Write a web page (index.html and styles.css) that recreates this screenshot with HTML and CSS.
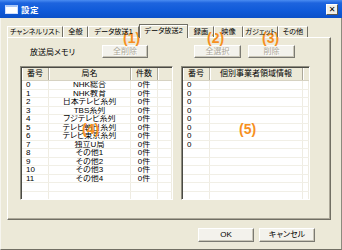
FILE: index.html
```html
<!DOCTYPE html>
<html lang="ja">
<head>
<meta charset="utf-8">
<link rel="stylesheet" href="styles.css">
</head>
<body>
<div class="window">
  <div class="titlebar">
    <span class="ticon"></span>
    <span class="ttext">設定</span>
    <span class="close">✕</span>
  </div>
  <div class="body">
    <div class="tabs">
      <span class="tab t1">チャンネルリスト</span>
      <span class="tab t2">全般</span>
      <span class="tab t3">データ放送1</span>
      <span class="tab t4 sel">データ放送2</span>
      <span class="tab t5">録画</span>
      <span class="tab t6">映像</span>
      <span class="tab t7">ガジェット</span>
      <span class="tab t8">その他</span>
    </div>
    <div class="panel">
      <div class="col col-left">
        <div class="toprow">
          <span class="label">放送局メモリ</span>
          <span class="btn dis w46">全削除</span>
        </div>
        <div class="list">
          <div class="row head"><span class="c num">番号</span><span class="c name">局名</span><span class="c cnt">件数</span><span class="c fill"></span></div>
          <div class="row"><span class="c num">0</span><span class="c name">NHK総合</span><span class="c cnt">0件</span><span class="c fill"></span></div>
          <div class="row"><span class="c num">1</span><span class="c name">NHK教育</span><span class="c cnt">0件</span><span class="c fill"></span></div>
          <div class="row"><span class="c num">2</span><span class="c name">日本テレビ系列</span><span class="c cnt">0件</span><span class="c fill"></span></div>
          <div class="row"><span class="c num">3</span><span class="c name">TBS系列</span><span class="c cnt">0件</span><span class="c fill"></span></div>
          <div class="row"><span class="c num">4</span><span class="c name">フジテレビ系列</span><span class="c cnt">0件</span><span class="c fill"></span></div>
          <div class="row"><span class="c num">5</span><span class="c name">テレビ朝日系列</span><span class="c cnt">0件</span><span class="c fill"></span></div>
          <div class="row"><span class="c num">6</span><span class="c name">テレビ東京系列</span><span class="c cnt">0件</span><span class="c fill"></span></div>
          <div class="row"><span class="c num">7</span><span class="c name">独立U局</span><span class="c cnt">0件</span><span class="c fill"></span></div>
          <div class="row"><span class="c num">8</span><span class="c name">その他1</span><span class="c cnt">0件</span><span class="c fill"></span></div>
          <div class="row"><span class="c num">9</span><span class="c name">その他2</span><span class="c cnt">0件</span><span class="c fill"></span></div>
          <div class="row"><span class="c num">10</span><span class="c name">その他3</span><span class="c cnt">0件</span><span class="c fill"></span></div>
          <div class="row"><span class="c num">11</span><span class="c name">その他4</span><span class="c cnt">0件</span><span class="c fill"></span></div>
          <div class="row"><span class="c num"></span><span class="c name"></span><span class="c cnt"></span><span class="c fill"></span></div>
          <div class="row"><span class="c num"></span><span class="c name"></span><span class="c cnt"></span><span class="c fill"></span></div>
          <div class="row"><span class="c num"></span><span class="c name"></span><span class="c cnt"></span><span class="c fill"></span></div>
        </div>
      </div>
      <div class="col col-right">
        <div class="toprow right">
          <span class="btn dis w47">全選択</span>
          <span class="btn dis w47">削除</span>
        </div>
        <div class="list">
          <div class="row head"><span class="c num">番号</span><span class="c info">個別事業者領域情報</span><span class="c fill"></span></div>
          <div class="row"><span class="c num">0</span><span class="c info"></span><span class="c fill"></span></div>
          <div class="row"><span class="c num">0</span><span class="c info"></span><span class="c fill"></span></div>
          <div class="row"><span class="c num">0</span><span class="c info"></span><span class="c fill"></span></div>
          <div class="row"><span class="c num">0</span><span class="c info"></span><span class="c fill"></span></div>
          <div class="row"><span class="c num">0</span><span class="c info"></span><span class="c fill"></span></div>
          <div class="row"><span class="c num">0</span><span class="c info"></span><span class="c fill"></span></div>
          <div class="row"><span class="c num">0</span><span class="c info"></span><span class="c fill"></span></div>
          <div class="row"><span class="c num">0</span><span class="c info"></span><span class="c fill"></span></div>
          <div class="row"><span class="c num"></span><span class="c info"></span><span class="c fill"></span></div>
          <div class="row"><span class="c num"></span><span class="c info"></span><span class="c fill"></span></div>
          <div class="row"><span class="c num"></span><span class="c info"></span><span class="c fill"></span></div>
          <div class="row"><span class="c num"></span><span class="c info"></span><span class="c fill"></span></div>
          <div class="row"><span class="c num"></span><span class="c info"></span><span class="c fill"></span></div>
          <div class="row"><span class="c num"></span><span class="c info"></span><span class="c fill"></span></div>
          <div class="row"><span class="c num"></span><span class="c info"></span><span class="c fill"></span></div>
        </div>
      </div>
    </div>
    <div class="footer">
      <span class="btn w56">OK</span>
      <span class="btn w56">キャンセル</span>
    </div>
  </div>
  <span class="note n1">(1)</span>
  <span class="note n2">(2)</span>
  <span class="note n3">(3)</span>
  <span class="note n4">(4)</span>
  <span class="note n5">(5)</span>
</div>
</body>
</html>
```

FILE: styles.css
```css
* { box-sizing: border-box; }
html, body { margin: 0; padding: 0; }
body {
  width: 342px;
  height: 250px;
  overflow: hidden;
  background: #ece9d8;
  font-family: "Liberation Sans", "Noto Sans CJK JP", sans-serif;
  font-size: 8px;
  font-feature-settings: "palt";
  color: #000;
}
.window {
  position: relative;
  width: 342px;
  height: 250px;
  background: #ece9d8;
  border-left: 1px solid #f6f5ef;
  border-right: 1px solid #8c8a7e;
  border-bottom: 1px solid #716f64;
  display: flex;
  flex-direction: column;
}
.titlebar {
  height: 18px;
  margin-left: -1px;
  margin-right: -1px;
  background: linear-gradient(#4a8cf2 0, #1d64de 3px, #0f5ad9 60%, #0b50c8 100%);
  display: flex;
  align-items: center;
  padding-left: 5px;
  padding-right: 4px;
  flex: none;
}
.ticon {
  width: 13px;
  height: 9px;
  background: #fff;
  border: 1px solid #cfe0ff;
  border-top: 2px solid #a9c6f7;
  margin-right: 3px;
}
.ttext {
  color: #fff;
  font-weight: bold;
  font-size: 8.5px;
  letter-spacing: 0.5px;
}
.close {
  margin-left: auto;
  width: 12px;
  height: 11px;
  background: #f2f0e8;
  border-top: 1px solid #fff;
  border-left: 1px solid #fff;
  border-right: 1px solid #5c5a50;
  border-bottom: 1px solid #5c5a50;
  font-size: 8px;
  font-weight: bold;
  line-height: 9px;
  text-align: center;
  color: #000;
  font-family: "DejaVu Sans", sans-serif;
}
.body {
  flex: 1;
  padding: 6px 10px 0 6px;
  display: flex;
  flex-direction: column;
}
.tabs {
  height: 13px;
  display: flex;
  align-items: flex-end;
  position: relative;
  z-index: 1;
  flex: none;
}
.tab {
  height: 11px;
  line-height: 10px;
  font-size: 7.2px;
  text-align: center;
  border-top: 1px solid #fff;
  border-left: 1px solid #fff;
  border-right: 1px solid #716f64;
  white-space: nowrap;
  display: flex;
  justify-content: center;
}
.t1 { width: 56px; }
.t2 { width: 25px; }
.t3 { width: 51px; }
.t4 { width: 49px; }
.t5 { width: 26px; }
.t6 { width: 29px; }
.t7 { width: 35px; }
.t8 { width: 30px; }
.tab.sel {
  height: 14px;
  margin-bottom: -1px;
  line-height: 12px;
  background: #ece9d8;
  border: 1px solid #716f64;
  border-bottom: none;
  box-shadow: inset 1px 1px 0 #fff;
}
.panel {
  height: 183px;
  border-top: 1px solid #fff;
  border-left: 1px solid #fff;
  border-right: 1px solid #716f64;
  border-bottom: 1px solid #716f64;
  box-shadow: inset -1px -1px 0 #aca899;
  display: flex;
  padding: 7px 0 0 12px;
  gap: 8px;
  flex: none;
}
.col {
  display: flex;
  flex-direction: column;
  gap: 8px;
}
.col-left { width: 153px; }
.col-right { width: 129px; }
.toprow {
  height: 13px;
  display: flex;
  align-items: center;
}
.toprow.right { padding-left: 13px; gap: 7px; }
.label {
  width: 82px;
  padding-left: 10px;
}
.btn {
  height: 13px;
  line-height: 11px;
  text-align: center;
  background: #f3f2ec;
  border-top: 1px solid #fff;
  border-left: 1px solid #fff;
  border-right: 1px solid #7b7a72;
  border-bottom: 1px solid #7b7a72;
  box-shadow: inset -1px -1px 0 #c9c6b8;
  white-space: nowrap;
}
.btn.dis {
  color: #aca899;
  text-shadow: 1px 1px 0 #fff;
}
.w46 { width: 46px; }
.w47 { width: 47px; }
.w56 { width: 56px; height: 14px; line-height: 12px; }
.list {
  height: 134px;
  background: #fff;
  border-top: 1px solid #8f8d80;
  border-left: 1px solid #8f8d80;
  border-right: 1px solid #fff;
  border-bottom: 1px solid #fff;
  box-shadow: inset 1px 1px 0 #4a4a44;
  overflow: hidden;
  padding: 1px 0 0 1px;
}
.row {
  display: flex;
  height: 8.5px;
  line-height: 8.5px;
  border-bottom: 1px solid #f1efe6;
}
.row.head {
  height: 13px;
  line-height: 12px;
  background: #ece9d8;
  border-bottom: 1px solid #d6d2c2;
}
.c {
  border-right: 1px solid #efece2;
  white-space: nowrap;
  overflow: hidden;
}
.head .c {
  border-right: 1px solid #aca899;
  box-shadow: inset 1px 0 0 #fff;
}
.num { width: 27px; padding-left: 4px; }
.head .num { padding-left: 5px; }
.name { width: 82px; text-align: center; }
.cnt { width: 27px; text-align: center; }
.info { width: 93px; text-align: center; }
.fill { flex: 1; }
.head .fill { border-right: none; }
.footer {
  display: flex;
  gap: 5px;
  padding-left: 191px;
  padding-top: 8px;
}
.note {
  position: absolute;
  color: #f7901e;
  font-weight: bold;
  font-size: 14px;
  line-height: 12px;
  font-family: "Liberation Sans", sans-serif;
}
.n1 { left: 122px; top: 32px; }
.n2 { left: 206px; top: 32px; }
.n3 { left: 261px; top: 32px; }
.n4 { left: 81px; top: 123px; }
.n5 { left: 238px; top: 123px; }
```
